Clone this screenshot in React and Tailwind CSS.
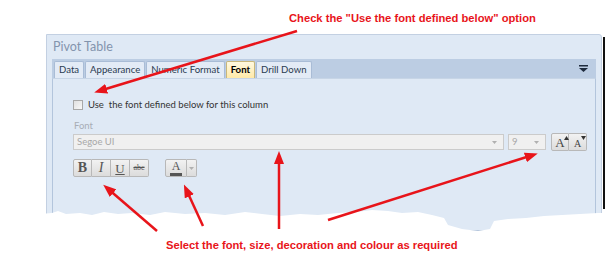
import React from "react";

const ui = { fontFamily: 'Lato, "Open Sans", sans-serif' };
const serif = { fontFamily: '"Liberation Serif", "DejaVu Serif", serif' };
const arial = { fontFamily: '"Liberation Sans", Arial, sans-serif' };

function Tab({ children, active }) {
  return (
    <div
      className={
        "h-[17px] px-[4px] flex items-center text-[9.6px] leading-none border border-b-0 rounded-t-[2px] " +
        (active
          ? "bg-gradient-to-b from-[#fff9e0] to-[#ffe9a8] border-[#c9b77a] font-bold text-black"
          : "bg-[#e3ebf6] border-[#a9bcd6] text-[#2a3a50]")
      }
    >
      {children}
    </div>
  );
}

function Caret() {
  return (
    <svg width="5" height="3" viewBox="0 0 5 3">
      <path d="M0 0 L5 0 L2.5 3 Z" fill="#b0b0b0" />
    </svg>
  );
}

function Btn({ children, w = "w-[19px]", cls = "" }) {
  return (
    <div
      className={
        "h-[18px] " + w + " flex items-center justify-center bg-gradient-to-b from-[#f2f2f2] to-[#dcdcdc] border border-[#b8b8b8] " + cls
      }
    >
      {children}
    </div>
  );
}

export default function App() {
  return (
    <div className="relative w-[615px] h-[261px] bg-white overflow-hidden" style={ui}>
      {/* top annotation */}
      <div className="h-[34px] flex items-start pt-[13px] pl-[289px]">
        <span className="text-[11.2px] font-bold text-[#e8141a] leading-none whitespace-nowrap" style={arial}>
          Check the "Use the font defined below" option
        </span>
      </div>

      {/* panel + right shadow */}
      <div className="flex items-start pl-[46px]">
        <div className="w-[556px] h-[198px] bg-[#dfe9f5] border border-[#c3d0e2] rounded-tr-[3px] flex flex-col">
          <div className="h-[24px] pl-[6px] flex items-center text-[12.5px] text-[#8394ad]">Pivot Table</div>
          <div className="mx-[5px] flex flex-col flex-1">
            <div className="h-[19px] bg-[#bccde3] flex items-end pl-[2px] gap-[1px] pr-[8px]">
              <Tab>Data</Tab>
              <Tab>Appearance</Tab>
              <Tab>Numeric Format</Tab>
              <Tab active>Font</Tab>
              <Tab>Drill Down</Tab>
              <div className="flex-1" />
              <div className="self-center">
                <svg width="9" height="7" viewBox="0 0 9 7">
                  <rect x="0" y="0" width="9" height="1.5" fill="#1e2b3d" />
                  <path d="M0 3 L9 3 L4.5 7 Z" fill="#1e2b3d" />
                </svg>
              </div>
            </div>
            <div className="flex-1 border border-[#b3c5dc] border-t-[#c7d5e6] bg-[#dfe9f5] pl-[20px] pt-[20px] flex flex-col">
              <div className="flex items-center gap-[5px] h-[11px]">
                <div className="w-[10px] h-[10px] border border-[#a8a8a8] bg-gradient-to-br from-[#e0e0e0] to-[#f8f8f8]" />
                <span className="text-[9.5px] text-[#333] leading-none">Use&nbsp; the font defined below for this column</span>
              </div>
              <div className="mt-[10px] h-[11px] text-[9.5px] leading-none text-[#a8adb5] pl-[1px] flex items-center">Font</div>
              <div className="mt-[2px] flex items-center">
                <div className="w-[431px] h-[16px] bg-[#f0f0f0] border border-[#cbcbcb] flex items-center pl-[3px] pr-[6px] justify-between">
                  <span className="text-[9.5px] text-[#a8a8a8] leading-none">Segoe UI</span>
                  <Caret />
                </div>
                <div className="ml-[4px] w-[38px] h-[16px] bg-[#f0f0f0] border border-[#cbcbcb] flex items-center pl-[3px] pr-[6px] justify-between">
                  <span className="text-[9.5px] text-[#a8a8a8] leading-none">9</span>
                  <Caret />
                </div>
                <div className="ml-[5px] flex">
                  <Btn w="w-[18px]" cls="rounded-l-[2px]">
                    <span className="relative text-[13px] leading-none text-[#444]" style={serif}>
                      A
                      <svg className="absolute -right-[4px] top-0" width="5" height="4" viewBox="0 0 5 4">
                        <path d="M0 4 L5 4 L2.5 0 Z" fill="#333" />
                      </svg>
                    </span>
                  </Btn>
                  <Btn w="w-[18px]" cls="border-l-0 rounded-r-[2px]">
                    <span className="relative text-[10px] leading-none text-[#444] mt-[3px]" style={serif}>
                      A
                      <svg className="absolute -right-[5px] -top-[3px]" width="5" height="4" viewBox="0 0 5 4">
                        <path d="M0 0 L5 0 L2.5 4 Z" fill="#333" />
                      </svg>
                    </span>
                  </Btn>
                </div>
              </div>
              <div className="mt-[8px] flex items-center">
                <div className="flex rounded-[2px]">
                  <Btn cls="rounded-l-[2px]">
                    <span className="text-[14px] font-bold leading-none text-[#555]" style={serif}>B</span>
                  </Btn>
                  <Btn cls="border-l-0">
                    <span className="text-[14px] italic leading-none text-[#555]" style={serif}>I</span>
                  </Btn>
                  <Btn cls="border-l-0">
                    <span className="text-[13px] underline leading-none text-[#555]" style={serif}>U</span>
                  </Btn>
                  <Btn cls="border-l-0 rounded-r-[2px]">
                    <span className="text-[8px] line-through leading-none text-[#555]" style={serif}>abc</span>
                  </Btn>
                </div>
                <div className="ml-[16px] flex">
                  <Btn w="w-[22px]" cls="rounded-l-[2px] flex-col">
                    <span className="text-[12px] leading-none text-[#555]" style={serif}>A</span>
                    <div className="w-[12px] h-[3px] bg-[#555] mt-[1px]" />
                  </Btn>
                  <Btn w="w-[10px]" cls="border-l-0 rounded-r-[2px]">
                    <Caret />
                  </Btn>
                </div>
              </div>
            </div>
          </div>
        </div>
        <div className="ml-[1px] mt-[3px] w-[2px] h-[172px] bg-[#111]" />
      </div>

      {/* torn edge + arrows overlay */}
      <svg className="absolute inset-0 pointer-events-none" width="615" height="261" viewBox="0 0 615 261">
        <polygon
          fill="#ffffff"
          points="40,214 52,213 58,211 66,214 80,213 92,215 104,212 118,214 132,213 150,215 165,212 185,214 205,213 225,215 245,212 262,214 280,216 300,214 318,215 338,213 356,212 372,210 388,211 402,213 418,212 432,215 444,218 448,225 462,229 478,231 490,229 494,221 508,219 526,218 544,216 562,215 580,214 598,213 615,213 615,261 40,261"
        />
        <defs>
          <marker id="ah" markerUnits="userSpaceOnUse" markerWidth="13" markerHeight="10" refX="8" refY="5" orient="auto">
            <path d="M0 0 L13 5 L0 10 Z" fill="#e8141a" />
          </marker>
        </defs>
        <g stroke="#e8141a" strokeWidth="2.5" fill="none" markerEnd="url(#ah)">
          <line x1="297" y1="31" x2="99" y2="91" />
          <line x1="157" y1="231" x2="107" y2="188" />
          <line x1="203" y1="226" x2="186" y2="189" />
          <line x1="279" y1="229" x2="279" y2="156" />
          <line x1="328" y1="220" x2="533" y2="155" />
        </g>
      </svg>

      {/* bottom annotation */}
      <div className="absolute left-[166px] top-[231px]">
        <span className="text-[11.2px] font-bold text-[#e8141a] leading-none whitespace-nowrap" style={arial}>
          Select the font, size, decoration and colour as required
        </span>
      </div>
    </div>
  );
}
